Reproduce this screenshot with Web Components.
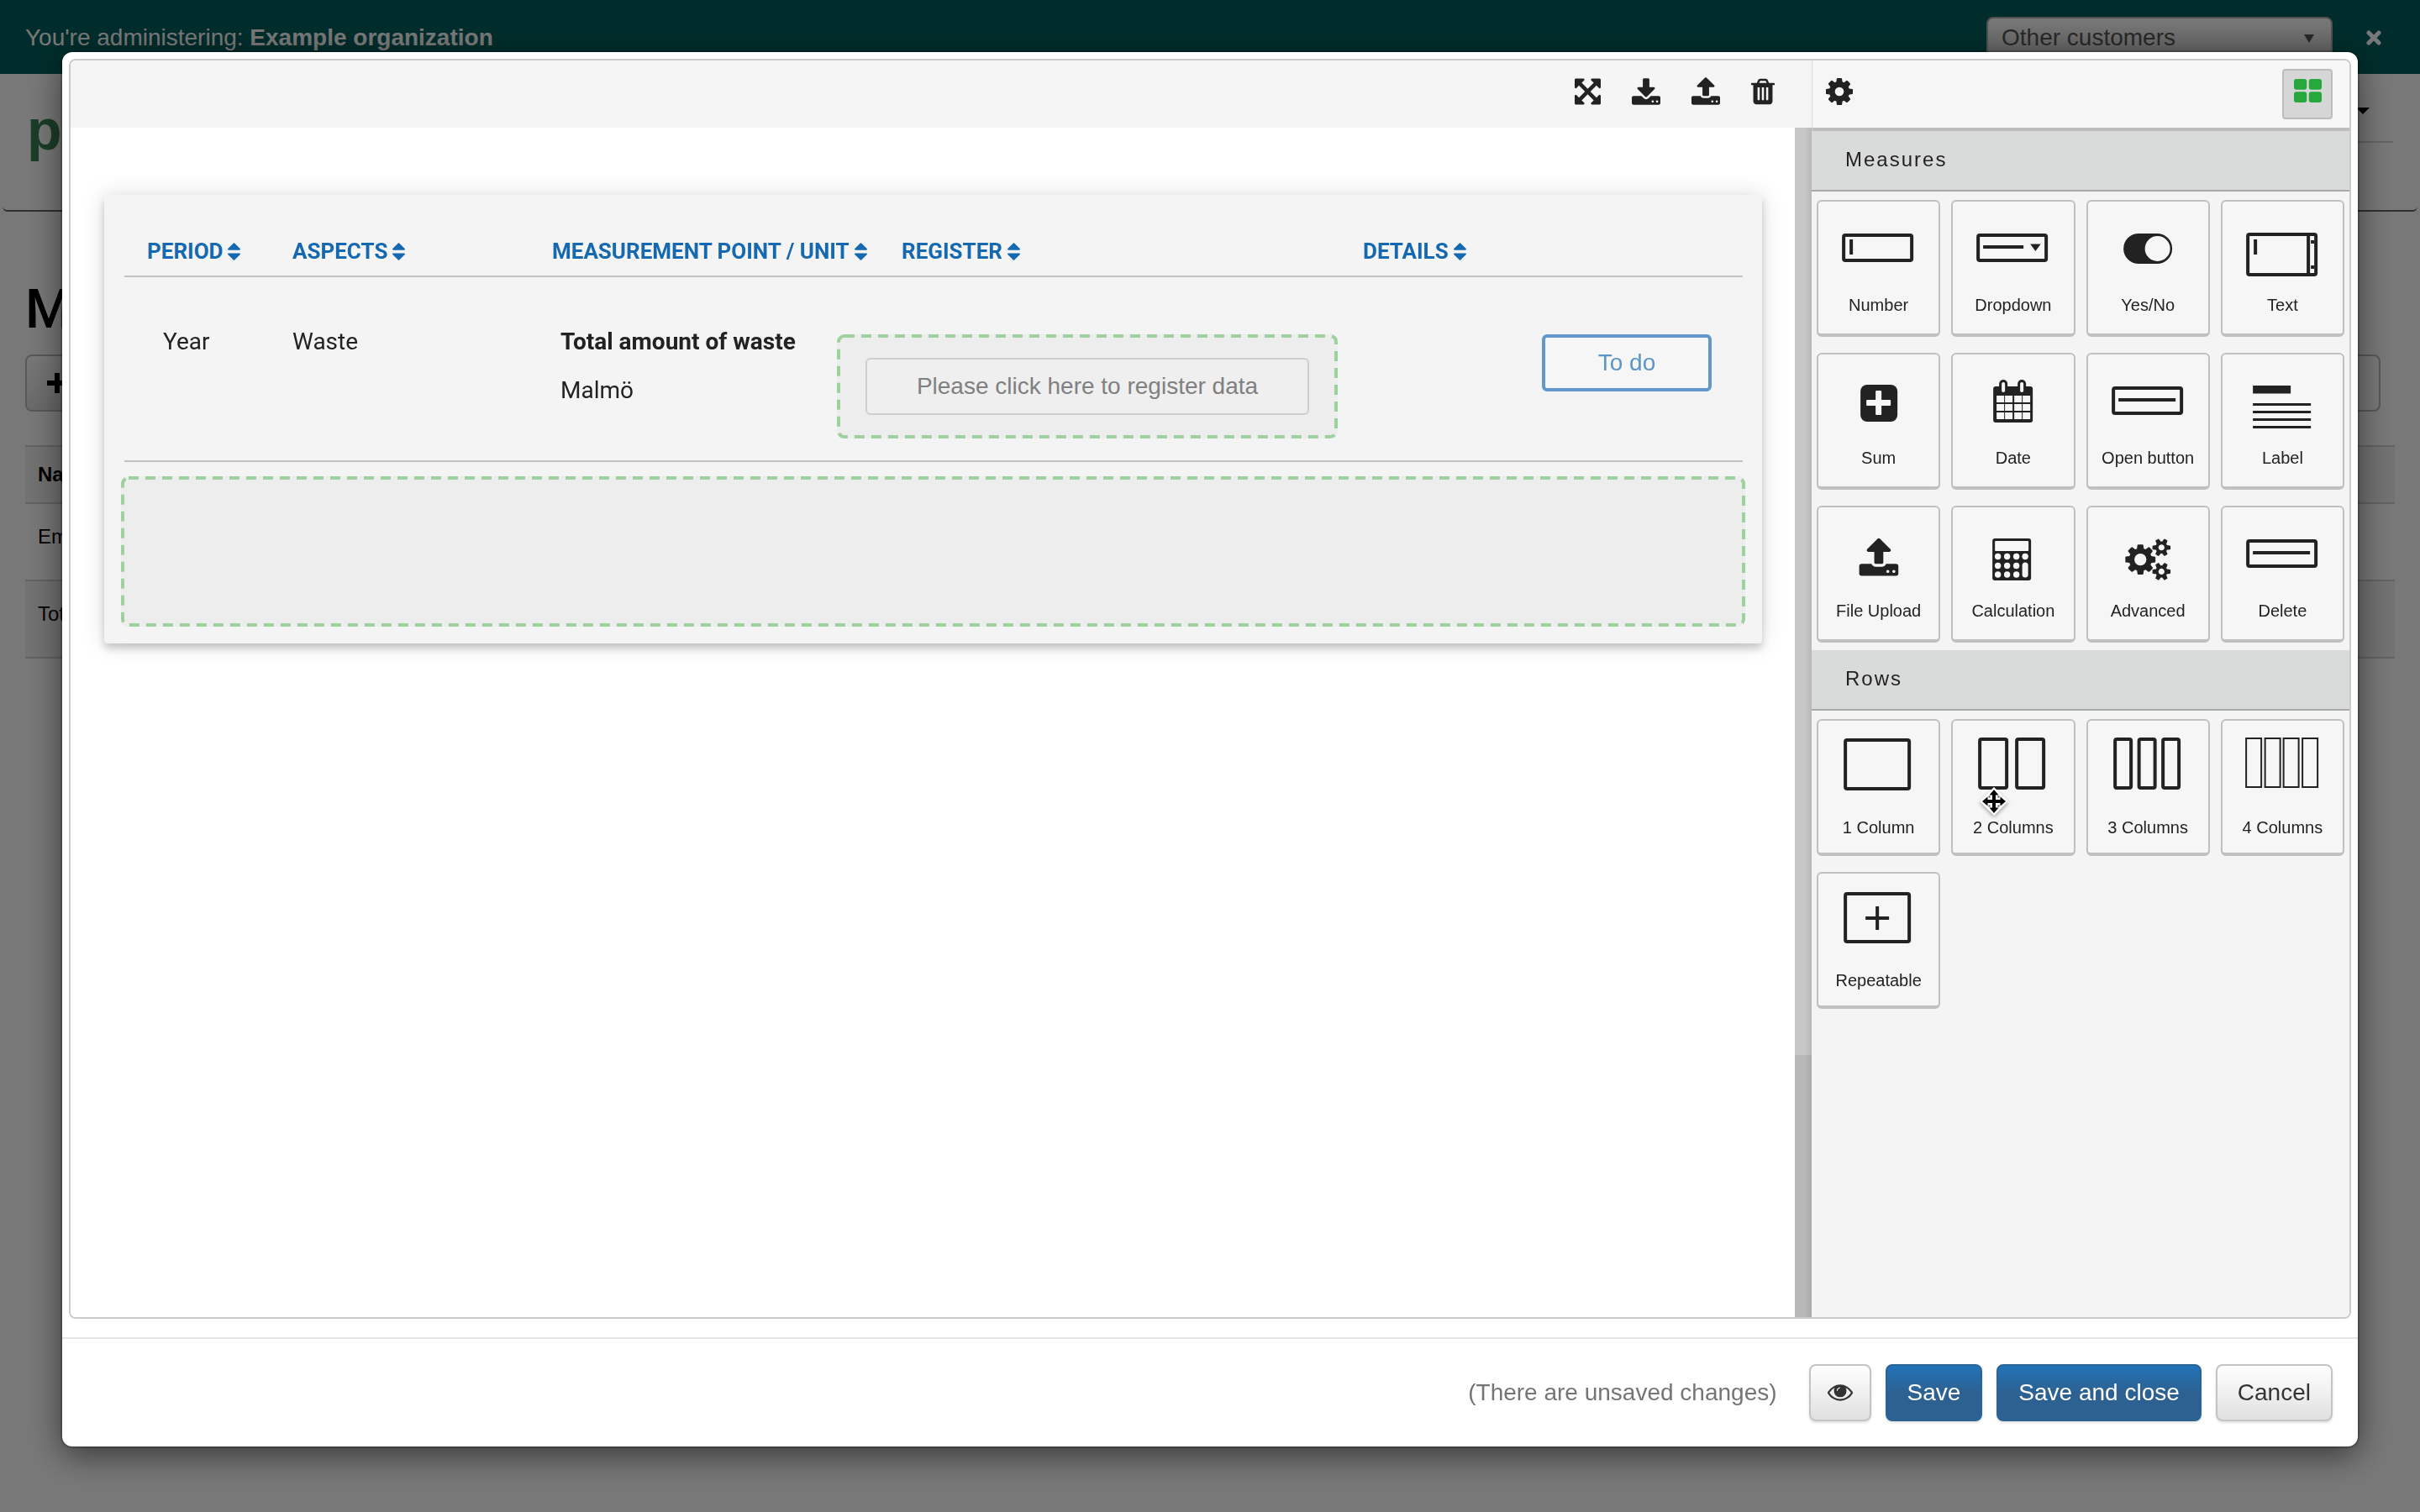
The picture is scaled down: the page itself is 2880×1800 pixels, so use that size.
<!DOCTYPE html>
<html lang="en">
<head>
<meta charset="utf-8">
<title>Form editor</title>
<style>
  body { margin: 0; background: #fff; color: #222; font: 28px/32px "Liberation Sans", Arial, sans-serif; }
</style>
</head>
<body>
<admin-page></admin-page>
<editor-dialog></editor-dialog>

<script>
const FA = {
  expand: ['128 128 1536 1536', 'M1411 541l-355 355 355 355 144-144q29-31 70-14 39 17 39 59v448q0 26-19 45t-45 19h-448q-42 0-59-40-17-39 14-69l144-144-355-355-355 355 144 144q31 30 14 69-17 40-59 40h-448q-26 0-45-19t-19-45v-448q0-42 40-59 39-17 69 14l144 144 355-355-355-355-144 144q-19 19-45 19-12 0-24-5-40-17-40-59v-448q0-26 19-45t45-19h448q42 0 59 40 17 39-14 69l-144 144 355 355 355-355-144-144q-31-30-14-69 17-40 59-40h448q26 0 45 19t19 45v448q0 42-39 59-13 5-25 5-26 0-45-19z'],
  download: ['64 0 1664 1536', 'M1344 1344q0-26-19-45t-45-19-45 19-19 45 19 45 45 19 45-19 19-45zm256 0q0-26-19-45t-45-19-45 19-19 45 19 45 45 19 45-19 19-45zm128-224v320q0 40-28 68t-68 28h-1472q-40 0-68-28t-28-68v-320q0-40 28-68t68-28h465l135 136q58 56 136 56t136-56l136-136h464q40 0 68 28t28 68zm-325-569q17 41-14 70l-448 448q-18 19-45 19t-45-19l-448-448q-31-29-14-70 17-39 59-39h256v-448q0-26 19-45t45-19h256q26 0 45 19t19 45v448h256q42 0 59 39z'],
  upload: ['64 128 1664 1536', 'M1344 1472q0-26-19-45t-45-19-45 19-19 45 19 45 45 19 45-19 19-45zm256 0q0-26-19-45t-45-19-45 19-19 45 19 45 45 19 45-19 19-45zm128-224v320q0 40-28 68t-68 28h-1472q-40 0-68-28t-28-68v-320q0-40 28-68t68-28h427q21 56 70.5 92t110.5 36h256q61 0 110.5-36t70.5-92h427q40 0 68 28t28 68zm-325-648q-17 40-59 40h-256v448q0 26-19 45t-45 19h-256q-26 0-45-19t-19-45v-448h-256q-42 0-59-40-17-39 14-69l448-448q18-19 45-19t45 19l448 448q31 30 14 69z'],
  trash: ['192 128 1408 1536', 'M704 1376v-704q0-14-9-23t-23-9h-64q-14 0-23 9t-9 23v704q0 14 9 23t23 9h64q14 0 23-9t9-23zm256 0v-704q0-14-9-23t-23-9h-64q-14 0-23 9t-9 23v704q0 14 9 23t23 9h64q14 0 23-9t9-23zm256 0v-704q0-14-9-23t-23-9h-64q-14 0-23 9t-9 23v704q0 14 9 23t23 9h64q14 0 23-9t9-23zm-544-992h448l-48-117q-7-9-17-11h-317q-10 2-17 11zm928 32v64q0 14-9 23t-23 9h-96v948q0 83-47 143.5t-113 60.5h-832q-66 0-113-58.5t-47-141.5v-952h-96q-14 0-23-9t-9-23v-64q0-14 9-23t23-9h309l70-167q15-37 54-63t79-26h320q40 0 79 26t54 63l70 167h309q14 0 23 9t9 23z'],
  cog: ['128 128 1536 1536', 'M1152 896q0-106-75-181t-181-75-181 75-75 181 75 181 181 75 181-75 75-181zm512-109v222q0 12-8 23t-20 13l-185 28q-19 54-39 91 35 50 107 138 10 12 10 25t-9 23q-27 37-99 108t-94 71q-12 0-26-9l-138-108q-44 23-91 38-16 136-29 186-7 28-36 28h-222q-14 0-24.5-8.5t-11.5-21.5l-28-184q-49-16-90-37l-141 107q-10 9-25 9-14 0-25-11-126-114-165-168-7-10-7-23 0-12 8-23 15-21 51-66.5t54-70.5q-27-50-41-99l-183-27q-13-2-21-12.5t-8-23.5v-222q0-12 8-23t19-13l186-28q14-46 39-92-40-57-107-138-10-12-10-24 0-10 9-23 26-36 98.5-107.5t94.5-71.5q13 0 26 10l138 107q44-23 91-38 16-136 29-186 7-28 36-28h222q14 0 24.5 8.5t11.5 21.5l28 184q49 16 90 37l142-107q9-9 24-9 13 0 25 10 129 119 165 170 7 8 7 22 0 12-8 23-15 21-51 66.5t-54 70.5q26 50 41 98l183 28q13 2 21 12.5t8 23.5z'],
  grid: ['64 128 1664 1408', 'M832 1024v384q0 52-38 90t-90 38h-512q-52 0-90-38t-38-90v-384q0-52 38-90t90-38h512q52 0 90 38t38 90zm0-768v384q0 52-38 90t-90 38h-512q-52 0-90-38t-38-90v-384q0-52 38-90t90-38h512q52 0 90 38t38 90zm896 768v384q0 52-38 90t-90 38h-512q-52 0-90-38t-38-90v-384q0-52 38-90t90-38h512q52 0 90 38t38 90zm0-768v384q0 52-38 90t-90 38h-512q-52 0-90-38t-38-90v-384q0-52 38-90t90-38h512q52 0 90 38t38 90z'],
  sort: ['384 256 1024 1280', 'M1408 1088q0 26-19 45l-448 448q-19 19-45 19t-45-19l-448-448q-19-19-19-45t19-45 45-19h896q26 0 45 19t19 45zm0-384q0 26-19 45t-45 19h-896q-26 0-45-19t-19-45 19-45l448-448q19-19 45-19t45 19l448 448q19 19 19 45z'],
  eye: ['0 384 1792 1152', 'M1664 960q-152-236-381-353 61 104 61 225 0 185-131.5 316.5t-316.5 131.5-316.5-131.5-131.5-316.5q0-121 61-225-229 117-381 353 133 205 333.5 326.5t434.5 121.5 434.5-121.5 333.5-326.5zm128 0q0 34-20 69-140 230-376.5 368.5t-499.5 138.5-499.5-139-376.5-368q-20-35-20-69t20-69q140-229 376.5-368t499.5-139 499.5 139 376.5 368q20 35 20 69z']
};
const COGS = 'M832 896q0-106-75-181t-181-75-181 75-75 181 75 181 181 75 181-75 75-181zm768 512q0-52-38-90t-90-38-90 38-38 90q0 53 37.5 90.5t90.5 37.5 90.5-37.5 37.5-90.5zm0-1024q0-52-38-90t-90-38-90 38-38 90q0 53 37.5 90.5t90.5 37.5 90.5-37.5 37.5-90.5zm-384 421v185q0 10-7 19.5t-16 10.5l-155 24q-11 35-32 76 34 48 90 115 7 11 7 20 0 12-7 19-23 30-82.5 89.5t-78.5 59.5q-11 0-21-7l-115-90q-37 19-77 31-11 108-23 155-7 24-30 24h-186q-11 0-20-7.5t-10-17.5l-23-153q-34-10-75-31l-118 89q-7 7-20 7-11 0-21-8-144-133-144-160 0-9 7-19 10-14 41-53t47-61q-23-44-35-82l-152-24q-10-1-17-9.5t-7-19.5v-185q0-10 7-19.5t16-10.5l155-24q11-35 32-76-34-48-90-115-7-11-7-20 0-12 7-20 22-30 82-89t79-59q11 0 21 7l115 90q34-18 77-32 11-108 23-154 7-24 30-24h186q11 0 20 7.5t10 17.5l23 153q34 10 75 31l118-89q8-7 20-7 11 0 21 8 144 133 144 160 0 8-7 19-12 16-42 54t-45 60q23 48 34 82l152 23q10 2 17 10.5t7 19.5zm640 533v140q0 16-149 31-12 27-30 52 51 113 51 138 0 4-4 7-122 71-124 71-8 0-46-47t-52-68q-20 2-30 2t-30-2q-14 21-52 68t-46 47q-2 0-124-71-4-3-4-7 0-25 51-138-18-25-30-52-149-15-149-31v-140q0-16 149-31 13-29 30-52-51-113-51-138 0-4 4-7 4-2 35-20t59-34 30-16q8 0 46 46.5t52 67.5q20-2 30-2t30 2q51-71 92-112l6-2q4 0 124 70 4 3 4 7 0 25-51 138 17 23 30 52 149 15 149 31zm0-1024v140q0 16-149 31-12 27-30 52 51 113 51 138 0 4-4 7-122 71-124 71-8 0-46-47t-52-68q-20 2-30 2t-30-2q-14 21-52 68t-46 47q-2 0-124-71-4-3-4-7 0-25 51-138-18-25-30-52-149-15-149-31v-140q0-16 149-31 13-29 30-52-51-113-51-138 0-4 4-7 4-2 35-20t59-34 30-16q8 0 46 46.5t52 67.5q20-2 30-2t30 2q51-71 92-112l6-2q4 0 124 70 4 3 4 7 0 25-51 138 17 23 30 52 149 15 149 31z';

/* Pictograms of the palette tiles; "o" is an outlined box, "f" a filled one. */
const o = (x, y, w, h, s = 4, r = 2) => `<rect x="${x + s / 2}" y="${y + s / 2}" width="${w - s}" height="${h - s}" rx="${r}" fill="none" stroke="currentColor" stroke-width="${s}"/>`;
const f = (x, y, w, h, c = 'currentColor', r = 0) => `<rect x="${x}" y="${y}" width="${w}" height="${h}" rx="${r}" fill="${c}"/>`;
const BG = '#f6f6f6';
const grid = (xs, ys, fn) => ys.map(y => xs.map(x => fn(x, y)).join('')).join('');
const TILE = {
  number: o(30, 40, 85, 34) + f(39, 47, 4, 18),
  dropdown: o(30, 40, 85, 34) + f(38, 54, 48, 4) + '<path d="M94 52.500h12.500l-6.200 8.500z"/>',
  yesno: f(44, 40, 58, 36, 'currentColor', 18) + `<circle cx="84.500" cy="58" r="15" fill="${BG}"/>`,
  text: o(30, 39, 85, 52) + f(39, 47, 4, 18) + f(102, 41, 4, 48) + f(107, 48, 4, 4) + f(107, 78, 4, 4),
  sum: f(52, 38, 44, 44, 'currentColor', 8) + f(59, 56, 29, 7, BG, 1) + f(70, 45, 7, 29, BG, 1),
  date: f(50, 40, 47, 43, 'currentColor', 3) + f(57, 32, 10, 18, 'currentColor', 5) + f(79, 32, 10, 18, 'currentColor', 5)
    + f(60, 35, 4, 12, BG, 2) + f(82, 35, 4, 12, BG, 2) + grid([54, 64, 75, 85], [51, 61, 71], (x, y) => f(x, y, 9, 8, BG)),
  button: o(30, 40, 85, 34) + f(38, 54, 68, 4),
  label: f(38, 39, 45, 9.5) + f(38, 60, 69, 3) + f(38, 69, 69, 3) + f(38, 78, 69, 3) + f(38, 87, 69, 3),
  upload: `<g transform="translate(48.700 37) scale(.028)"><path d="${FA.upload[1]}"/></g>`,
  calc: f(49, 39, 46, 50, 'currentColor', 3) + f(52, 42, 40, 12, BG, 1) + grid([55.5, 66.5, 77.5], [60.5, 71.5, 82], (x, y) => `<circle cx="${x}" cy="${y}" r="3.700" fill="${BG}"/>`)
    + `<circle cx="88" cy="60.500" r="3.700" fill="${BG}"/>` + f(84.5, 67.5, 7, 18, BG, 3.5),
  cogs: `<g transform="translate(48 39) scale(.028)"><path d="${COGS}"/></g>`,
  col1: o(32, 23, 80, 62),
  col2: o(32, 22, 36, 62) + o(76, 22, 36, 62),
  col3: o(32, 22, 23, 62) + o(60.5, 22, 23, 62) + o(89, 22, 23, 62),
  col4: o(29, 22, 20, 60, 2, 0) + o(51.5, 22, 20, 60, 2, 0) + o(73.5, 22, 20, 60, 2, 0) + o(96, 22, 20, 60, 2, 0),
  repeat: o(32, 24, 80, 61) + f(58, 53, 28, 4) + f(70, 41, 4, 28)
};

function define(name, render) {
  customElements.define(name, class extends HTMLElement {
    constructor() { super(); this.attachShadow({ mode: 'open' }); }
    connectedCallback() { this.shadowRoot.innerHTML = render(this); }
  });
}

define('ui-icon', el => {
  const [box, d] = FA[el.getAttribute('name')];
  const extra = el.getAttribute('name') === 'eye' ? '<circle cx="896" cy="850" r="350"/><path d="M896 600q-200 20-215 230" fill="none" stroke="#fff" stroke-width="70"/>' : '';
  return `<style>:host{display:block} svg{display:block;width:100%;height:100%;fill:currentColor;overflow:visible}</style>
    <svg viewBox="${box}" aria-hidden="true"><path d="${d}"/>${extra}</svg>`;
});

define('ui-button', () => `<style>
  :host{display:block}
  button{box-sizing:border-box;height:68px;padding:0 24px;border:2px solid #c4c4c4;border-radius:8px;display:flex;align-items:center;
    font:inherit;color:#333;background:linear-gradient(#fff,#e0e0e0);box-shadow:0 2px 3px rgba(0,0,0,.12)}
  :host([primary]) button{color:#fff;border-color:#2a6496;background:linear-gradient(#2273b9,#2d6191 50%)}
  :host([compact]) button{padding:0 20px}
  </style><button type="button"><slot></slot></button>`);

define('tool-button', el => `<style>
  :host{display:block}
  button{display:block;padding:0 0 6px;border:0;background:none;color:#222}
  ui-icon{height:32px;width:${el.getAttribute('size')}px}
  :host([active]) button{box-sizing:border-box;width:60px;height:60px;padding:10px 12px 20px;border:2px solid #bcbcbc;border-radius:4px;background:#d6d6d6;color:#27a83c}
  :host([active]) ui-icon{height:28px}
  </style><button type="button" aria-label="${el.getAttribute('label')}"><ui-icon name="${el.getAttribute('icon')}"></ui-icon></button>`);

define('palette-tile', el => {
  const h = el.hasAttribute('tall') ? 115 : 111;
  return `<style>
  :host{display:block;min-width:0}
  button{box-sizing:border-box;width:100%;height:163px;padding:0;border:2px solid #c0c0c0;border-bottom-width:4px;border-radius:6px;
    background:${BG};color:#222;font:20px/24px "Liberation Sans",Arial,sans-serif;display:flex;flex-direction:column}
  svg{display:block;width:100%;height:${h}px;fill:currentColor}
  span{width:100%;text-align:center;white-space:nowrap}
  </style><button type="button"><svg viewBox="2 2 143 ${h}" aria-hidden="true">${TILE[el.getAttribute('icon')]}</svg><span><slot></slot></span></button>`;
});

define('palette-section', el => `<style>
  :host{display:block}
  h2{margin:0;padding:18px 40px 20px;background:#d9dbda;border-bottom:2px solid #a8aaa9;font-size:24px;line-height:32px;font-weight:400;letter-spacing:2px;color:#222}
  div{display:grid;grid-template-columns:repeat(4,1fr);gap:19px 13px;padding:10px 6px 9px}
  </style><h2>${el.getAttribute('heading')}</h2><div><slot></slot></div>`);

define('side-palette', () => `<style>
  :host{display:block;flex:0 0 640px;box-sizing:border-box;background:#f4f4f4}
  header{box-sizing:border-box;height:84px;display:flex;justify-content:space-between;align-items:center;padding:0 20px 0 16px;background:#f6f6f6;border-left:1px solid #ddd;border-bottom:4px solid #bdbdbd}
  </style>
  <header><tool-button icon="cog" size="32" label="Settings"></tool-button><tool-button icon="grid" size="33" label="Components" active></tool-button></header>
  <palette-section heading="Measures">
    <palette-tile icon="number">Number</palette-tile><palette-tile icon="dropdown">Dropdown</palette-tile>
    <palette-tile icon="yesno">Yes/No</palette-tile><palette-tile icon="text">Text</palette-tile>
    <palette-tile icon="sum">Sum</palette-tile><palette-tile icon="date">Date</palette-tile>
    <palette-tile icon="button">Open button</palette-tile><palette-tile icon="label">Label</palette-tile>
    <palette-tile icon="upload">File Upload</palette-tile><palette-tile icon="calc">Calculation</palette-tile>
    <palette-tile icon="cogs">Advanced</palette-tile><palette-tile icon="button">Delete</palette-tile>
  </palette-section>
  <palette-section heading="Rows">
    <palette-tile icon="col1" tall>1 Column</palette-tile><palette-tile icon="col2" tall>2 Columns</palette-tile>
    <palette-tile icon="col3" tall>3 Columns</palette-tile><palette-tile icon="col4" tall>4 Columns</palette-tile>
    <palette-tile icon="repeat" tall>Repeatable</palette-tile>
  </palette-section>`);

define('sort-header', () => `<style>
  :host{display:block}
  button{display:flex;align-items:center;gap:6px;padding:0;border:0;background:none;color:#1469b0;font:700 26px/32px Roboto,sans-serif;white-space:nowrap}
  ui-icon{width:15px;height:19px}
  </style><button type="button"><slot></slot><ui-icon name="sort"></ui-icon></button>`);

define('drop-zone', () => `<style>
  :host{display:block;position:relative;box-sizing:border-box;border-radius:8px;background:#ededed}
  svg{position:absolute;inset:0;width:100%;height:100%;pointer-events:none}
  rect{width:calc(100% - 4px);height:calc(100% - 4px);fill:none;stroke:#9fd1a0;stroke-width:4px;stroke-dasharray:12px 8px}
  </style><slot></slot><svg aria-hidden="true"><rect x="2" y="2" rx="7"/></svg>`);

define('form-card', () => `<style>
  :host{display:block;margin:80px 39px 0 40px;padding:0 20px 20px;background:#f4f4f4;border-radius:4px;box-shadow:0 6px 10px rgba(0,0,0,.18),0 0 28px rgba(0,0,0,.13);font-family:Roboto,sans-serif}
  .frame{padding:0 3px 0 4px}
  table{width:100%;table-layout:fixed;border-collapse:separate;border-spacing:0}
  th,td{padding:0;text-align:left;vertical-align:top;border-bottom:2px solid #c3c3c3}
  th{height:45px;padding-top:51px}
  .c1{width:200px}.c2{width:309px}.c3{width:339px}.c4{width:626px}
  th.c1{padding-left:27px;width:173px} th.c4{padding-left:77px;width:549px}
  td{height:157px;padding-top:61px}
  td.c1{padding-left:46px} td.c3{padding-left:10px}
  td.c4,td.c5{height:150px;padding-top:68px}
  p{margin:0 0 26px;line-height:32px}
  .slot-zone{width:596px;padding:28px 34px}
  button{font:28px/32px "Liberation Sans",Arial,sans-serif;box-sizing:border-box;height:68px;display:block}
  .reg{width:100%;border:2px solid #cfcfcf;border-radius:6px;background:#efefef;color:#808080}
  .todo{margin-left:auto;margin-right:37px;width:202px;border:4px solid #6398ca;border-radius:6px;background:#f6f6f6;color:#5b95c9}
  .row-zone{height:179px;margin-top:17px}
  </style>
  <div class="frame"><table>
    <thead><tr>
      <th class="c1"><sort-header>PERIOD</sort-header></th>
      <th class="c2"><sort-header>ASPECTS</sort-header></th>
      <th class="c3"><sort-header>MEASUREMENT POINT / UNIT</sort-header></th>
      <th class="c4"><sort-header>REGISTER</sort-header></th>
      <th class="c5"><sort-header>DETAILS</sort-header></th>
    </tr></thead>
    <tbody><tr>
      <td class="c1">Year</td><td class="c2">Waste</td>
      <td class="c3"><p><b>Total amount of waste</b></p><p>Malmö</p></td>
      <td class="c4"><drop-zone class="slot-zone"><button class="reg" type="button">Please click here to register data</button></drop-zone></td>
      <td class="c5"><button class="todo" type="button">To do</button></td>
    </tr></tbody>
  </table></div>
  <drop-zone class="row-zone"></drop-zone>`);

define('form-canvas', () => `<style>
  :host{flex:1;min-width:0;display:flex;flex-direction:column}
  header{box-sizing:border-box;height:80px;display:flex;justify-content:flex-end;align-items:center;gap:37px;padding:0 44px 0 0;background:#f5f5f5;box-shadow:0 2px 8px rgba(0,0,0,.1)}
  .body{flex:1;display:flex}
  .view{flex:1;min-width:0;background:#fff}
  .bar{width:20px;background:linear-gradient(90deg,transparent 60%,rgba(0,0,0,.08)),linear-gradient(#c7c7c7 78%,#b8b8b8 78%)}
  </style>
  <header>
    <tool-button icon="expand" size="31" label="Full screen"></tool-button>
    <tool-button icon="download" size="34" label="Download"></tool-button>
    <tool-button icon="upload" size="34" label="Upload"></tool-button>
    <tool-button icon="trash" size="28" label="Delete form"></tool-button>
  </header>
  <div class="body"><div class="view"><form-card></form-card></div><div class="bar"></div></div>`);

define('editor-dialog', () => `<style>
  :host{position:fixed;inset:0;background:rgba(0,0,0,.53);display:flex;padding:62px 74px 78px}
  .dialog{flex:1;min-width:0;display:flex;flex-direction:column;background:#fff;border-radius:12px;box-shadow:0 0 0 2px rgba(0,0,0,.2),0 10px 40px rgba(0,0,0,.55)}
  .panel{flex:1;display:flex;margin:8px 8px 22px;border:2px solid #cacaca;border-radius:8px;overflow:hidden}
  footer{display:flex;justify-content:flex-end;align-items:center;gap:17px;padding:30px;border-top:2px solid #e5e5e5}
  .note{color:#757575;margin-right:21px}
  ui-icon{width:30px;height:20px}
  .move{position:absolute;left:2356px;top:937px;width:34px;height:34px;filter:drop-shadow(0 2px 2px rgba(0,0,0,.35))}
  </style>
  <div class="dialog" role="dialog" aria-label="Form editor">
    <div class="panel"><form-canvas></form-canvas><side-palette></side-palette></div>
    <footer><span class="note">(There are unsaved changes)</span>
      <ui-button compact><ui-icon name="eye"></ui-icon></ui-button>
      <ui-button primary>Save</ui-button><ui-button primary>Save and close</ui-button><ui-button>Cancel</ui-button>
    </footer>
  </div>
  <svg class="move" viewBox="0 0 34 34" aria-hidden="true"><path d="M17 0l17 17-17 17L0 17z" fill="#fff"/>
    <path d="M17 3l5.500 6.500h-3.500v5.500h5.500v-3.500L31 17l-6.500 5.500V19H19v5.500h3.500L17 31l-5.500-6.500H15V19H9.500v3.500L3 17l6.500-5.500V15H15V9.500h-3.500z"/>
    <path d="M10.500 10.500h2v2h-2zM21.500 10.500h2v2h-2zM10.500 21.500h2v2h-2zM21.500 21.500h2v2h-2z" fill="#555"/></svg>`);

define('admin-page', () => `<style>
  :host{display:block}
  .top{height:88px;box-sizing:border-box;padding:20px 46px 0 30px;background:#00605d;color:#fff;display:flex;justify-content:space-between;align-items:flex-start}
  .top p{margin:0;padding-top:9px}
  .right{display:flex;gap:40px}
  .pick{display:grid;width:412px}
  .pick>*{grid-area:1/1}
  select{appearance:none;box-sizing:border-box;height:50px;padding:0 16px;border:2px solid #aaa;border-radius:8px;background:linear-gradient(#fff,#ccc);color:#555;font:inherit}
  .pick svg{justify-self:end;width:12px;height:10px;margin:21px 22px 0 0;fill:#555}
  .close{padding:0;border:0;background:none;display:block;width:18px;height:50px}
  .close svg{display:block;width:18px;height:20px;stroke:#fff;stroke-width:5;stroke-linecap:round}
  nav{box-sizing:border-box;height:164px;margin:0 3px;padding:0 29px;border-bottom:2px solid #666;border-radius:6px;display:flex;justify-content:space-between}
  .logo{color:#3a8258;font:700 68px/84px "Liberation Sans",Arial,sans-serif;padding-top:24px}
  .user{box-sizing:border-box;width:240px;height:82px;padding-top:8px;border-bottom:2px solid #d4d4d4;display:flex;justify-content:flex-end;align-items:center}
  .user svg{width:16px;height:8px;margin-right:28px}
  main{padding:80px 30px 0}
  h1{margin:0;font:500 64px/74px Roboto,sans-serif;color:#000}
  .bar{display:flex;justify-content:space-between;padding:16px 17px 40px 0}
  .bar button,.bar input{box-sizing:border-box;height:68px;border:2px solid #bbb;border-radius:8px;font:inherit}
  .bar button{width:200px;padding:0 24px;background:linear-gradient(#fff,#e0e0e0);text-align:left}
  .bar button svg{display:block;width:24px;height:24px;fill:#000}
  .bar input{width:400px}
  table{width:100%;border-spacing:0;font-size:24px;color:#000}
  th,td{text-align:left;padding:0 15px;border-top:2px solid #d0d0d0}
  th{height:66px;background:#f2f2f2}
  td{height:78px;padding-bottom:12px}
  tr:last-child td{background:#f2f2f2;border-bottom:2px solid #d0d0d0}
  </style>
  <div class="top"><p>You're administering: <b>Example organization</b></p>
    <div class="right"><div class="pick"><select aria-label="Customer"><option>Other customers</option></select><svg viewBox="0 0 12 10" aria-hidden="true"><path d="M0 0h12L6 10z"/></svg></div>
    <button class="close" type="button" aria-label="Close"><svg viewBox="0 0 18 20"><path d="M3 4l12 12M15 4L3 16"/></svg></button></div></div>
  <nav><div class="logo">po</div><div class="user"><svg viewBox="0 0 16 8" aria-hidden="true"><path d="M0 0h16L8 8z"/></svg></div></nav>
  <main><h1>M</h1>
    <div class="bar"><button type="button" aria-label="Add"><svg viewBox="0 0 24 24"><path d="M9 0h6v9h9v6h-9v9H9v-9H0V9h9z"/></svg></button><input type="search" aria-label="Search"></div>
    <table><tr><th>Na</th></tr><tr><td>Em</td></tr><tr><td>Tot</td></tr></table>
  </main>`);
</script>
</body>
</html>
